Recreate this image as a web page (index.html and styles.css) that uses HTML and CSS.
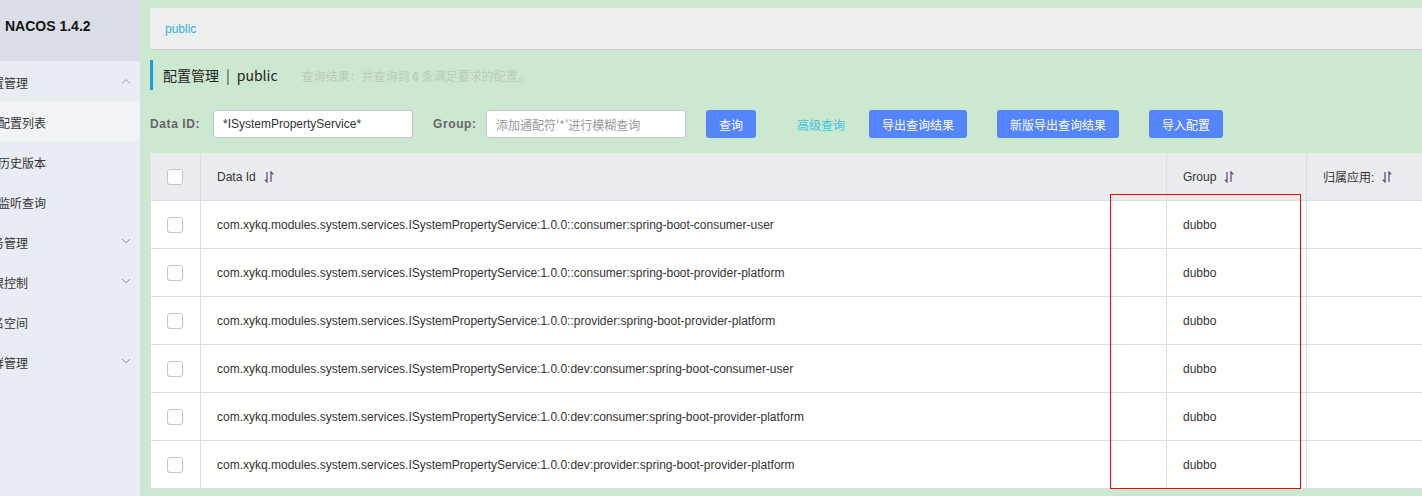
FILE: index.html
```html
<!DOCTYPE html>
<html lang="zh">
<head>
<meta charset="utf-8">
<title>NACOS</title>
<link rel="stylesheet" href="styles.css">
</head>
<body>
<div class="app">
  <aside class="sidebar">
    <div class="logo">NACOS 1.4.2</div>
    <ul class="menu">
      <li class="item top"><span class="label">配置管理</span><svg class="chev" viewBox="0 0 10 6"><path d="M1 5.5L5 1.5L9 5.5"/></svg></li>
      <li class="item sub active"><span class="label">配置列表</span></li>
      <li class="item sub"><span class="label">历史版本</span></li>
      <li class="item sub"><span class="label">监听查询</span></li>
      <li class="item top"><span class="label">服务管理</span><svg class="chev" viewBox="0 0 10 6"><path d="M1 1L5 5L9 1"/></svg></li>
      <li class="item top"><span class="label">权限控制</span><svg class="chev" viewBox="0 0 10 6"><path d="M1 1L5 5L9 1"/></svg></li>
      <li class="item top"><span class="label">命名空间</span></li>
      <li class="item top"><span class="label">集群管理</span><svg class="chev" viewBox="0 0 10 6"><path d="M1 1L5 5L9 1"/></svg></li>
    </ul>
  </aside>
  <main class="main">
    <div class="crumb"><span class="ns">public</span></div>
    <div class="title">
      <span class="title-text">配置管理<span class="sep">|</span>public</span>
      <span class="hint">查询结果：共查询到 <b>6</b> 条满足要求的配置。</span>
    </div>
    <div class="form">
      <label class="flabel">Data ID:</label>
      <div class="input">*ISystemPropertyService*</div>
      <label class="flabel g">Group:</label>
      <div class="input ph">添加通配符'*'进行模糊查询</div>
      <button class="btn b1">查询</button>
      <span class="link">高级查询</span>
      <button class="btn b2">导出查询结果</button>
      <button class="btn b3">新版导出查询结果</button>
      <button class="btn b3">导入配置</button>
    </div>
    <div class="table">
      <div class="row head">
        <div class="c ck"><span class="box"></span></div>
        <div class="c id">Data Id <svg class="sort" viewBox="0 0 10 12"><path d="M3 1V11L0.8 8.6M7 11V1L9.2 3.4"/></svg></div>
        <div class="c grp">Group <svg class="sort" viewBox="0 0 10 12"><path d="M3 1V11L0.8 8.6M7 11V1L9.2 3.4"/></svg></div>
        <div class="c owner">归属应用: <svg class="sort" viewBox="0 0 10 12"><path d="M3 1V11L0.8 8.6M7 11V1L9.2 3.4"/></svg></div>
      </div>
      <div class="row">
        <div class="c ck"><span class="box"></span></div>
        <div class="c id">com.xykq.modules.system.services.ISystemPropertyService:1.0.0::consumer:spring-boot-consumer-user</div>
        <div class="c grp">dubbo</div>
        <div class="c owner"></div>
      </div>
      <div class="row">
        <div class="c ck"><span class="box"></span></div>
        <div class="c id">com.xykq.modules.system.services.ISystemPropertyService:1.0.0::consumer:spring-boot-provider-platform</div>
        <div class="c grp">dubbo</div>
        <div class="c owner"></div>
      </div>
      <div class="row">
        <div class="c ck"><span class="box"></span></div>
        <div class="c id">com.xykq.modules.system.services.ISystemPropertyService:1.0.0::provider:spring-boot-provider-platform</div>
        <div class="c grp">dubbo</div>
        <div class="c owner"></div>
      </div>
      <div class="row">
        <div class="c ck"><span class="box"></span></div>
        <div class="c id">com.xykq.modules.system.services.ISystemPropertyService:1.0.0:dev:consumer:spring-boot-consumer-user</div>
        <div class="c grp">dubbo</div>
        <div class="c owner"></div>
      </div>
      <div class="row">
        <div class="c ck"><span class="box"></span></div>
        <div class="c id">com.xykq.modules.system.services.ISystemPropertyService:1.0.0:dev:consumer:spring-boot-provider-platform</div>
        <div class="c grp">dubbo</div>
        <div class="c owner"></div>
      </div>
      <div class="row">
        <div class="c ck"><span class="box"></span></div>
        <div class="c id">com.xykq.modules.system.services.ISystemPropertyService:1.0.0:dev:provider:spring-boot-provider-platform</div>
        <div class="c grp">dubbo</div>
        <div class="c owner"></div>
      </div>
      <div class="mark"></div>
    </div>
  </main>
</div>
</body>
</html>
```

FILE: styles.css
```css
* { box-sizing: border-box; }
html, body { margin: 0; padding: 0; }
body {
  width: 1422px;
  height: 496px;
  overflow: hidden;
  font-family: "Liberation Sans", "Noto Sans CJK SC", sans-serif;
  font-size: 12px;
  color: #333;
}
.app { display: flex; height: 496px; }

.sidebar {
  width: 140px;
  flex: none;
  background: #e9ecf2;
  overflow: hidden;
}
.logo {
  height: 61px;
  background: #dadee6;
  padding: 18px 0 0 5px;
  font-weight: bold;
  font-size: 14px;
  color: #111;
  white-space: nowrap;
}
.menu { list-style: none; margin: 0; padding: 0; }
.item {
  height: 40px;
  display: flex;
  align-items: center;
  padding-top: 3px;
  position: relative;
  white-space: nowrap;
  color: #333;
}
.item .label { font-family: "Noto Sans CJK SC", sans-serif; font-size: 12px; }
.item.top .label { margin-left: -20px; }
.item.sub .label { margin-left: -2px; }
.item.active { background: #f2f3f7; }
.chev {
  position: absolute;
  left: 121px;
  top: 17px;
  width: 10px;
  height: 6px;
  fill: none;
  stroke: #999;
  stroke-width: 1;
}

.main {
  flex: 1;
  background: #cde8d0;
  padding: 8px 0 0 10px;
  min-width: 0;
  overflow: hidden;
}
.crumb {
  height: 42px;
  background: #eeeeee;
  border-bottom: 1px solid #cccccc;
  padding-left: 15px;
  display: flex;
  align-items: center;
}
.ns { color: #2fb4de; font-size: 12px; }

.title {
  margin-top: 10px;
  height: 30px;
  border-left: 3px solid #1a9fd9;
  padding-left: 10px;
  display: flex;
  align-items: center;
  white-space: nowrap;
}
.title-text { font-family: "Noto Sans CJK SC", sans-serif; font-size: 14px; color: #222; }
.sep { margin: 0 7px 0 7px; color: #333; }
.hint { margin-left: 24px; font-family: "Noto Sans CJK SC", sans-serif; color: #b9cbbc; font-size: 12px; }
.hint b { font-family: "Liberation Sans", sans-serif; }

.form {
  margin-top: 20px;
  height: 28px;
  display: flex;
  align-items: center;
  white-space: nowrap;
}
.flabel { font-weight: bold; color: #666; font-size: 12px; width: 63px; flex: none; letter-spacing: 0.6px; }
.flabel.g { width: 53px; margin-left: 20px; }
.input {
  width: 200px;
  height: 28px;
  background: #fff;
  border: 1px solid #c4c6cf;
  border-radius: 3px;
  padding-left: 9px;
  display: flex;
  align-items: center;
  font-size: 12px;
  color: #333;
  flex: none;
}
.input.ph { color: #999; font-family: "Noto Sans CJK SC", sans-serif; }
.btn {
  height: 28px;
  border: none;
  border-radius: 3px;
  background: #5584ff;
  color: #fff;
  font-family: "Noto Sans CJK SC", sans-serif;
  font-size: 12px;
  padding: 0 13px;
  flex: none;
}
.btn.b1 { margin-left: 20px; }
.btn.b2 { margin-left: 24px; }
.btn.b3 { margin-left: 30px; }
.link { margin-left: 41px; color: #39c6e0; font-family: "Noto Sans CJK SC", sans-serif; }

.table {
  margin-top: 15px;
  position: relative;
  width: 1400px;
  border-left: 1px solid #dcdee3;
  background: #fff;
}
.row {
  display: flex;
  height: 48px;
  border-bottom: 1px solid #dcdee3;
  background: #fff;
}
.row.head { background: #ebecf0; }
.c {
  display: flex;
  align-items: center;
  padding-left: 16px;
  border-right: 1px solid #dcdee3;
  white-space: nowrap;
  flex: none;
}
.ck { width: 50px; padding-left: 16px; }
.id { width: 966px; }
.grp { width: 140px; }
.owner { flex: 1; border-right: none; }
.box {
  width: 16px;
  height: 16px;
  border: 1px solid #c4c6cf;
  border-radius: 3px;
  background: #fff;
}
.sort {
  width: 10px;
  height: 12px;
  margin-left: 8px;
  fill: none;
  stroke: #5b3f6e;
  stroke-width: 1.2;
}
.mark {
  position: absolute;
  left: 959px;
  top: 41px;
  width: 191px;
  height: 295px;
  border: 1px solid #ff0000;
  pointer-events: none;
}
```
